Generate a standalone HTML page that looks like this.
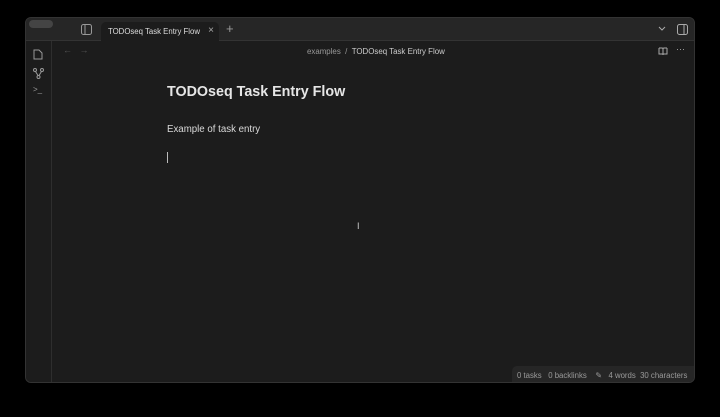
<!DOCTYPE html>
<html><head><meta charset="utf-8"><style>
*{margin:0;padding:0;box-sizing:border-box}
body{width:720px;height:417px;background:#000;font-family:"Liberation Sans",sans-serif;position:relative;overflow:hidden;color:#dadada}
.win{position:absolute;left:25px;top:17px;width:670px;height:366px;background:#1c1c1c;border-radius:6px;overflow:hidden;border:1px solid #333}
.top{position:absolute;left:0;top:0;width:100%;height:23px;background:#262626;border-bottom:1px solid #333}
.tab{position:absolute;left:75px;top:4px;width:118px;height:20px;background:#1c1c1c;border-radius:5px 5px 0 0;font-size:7.8px;color:#dcdcdc;padding:5px 0 0 7px}
.ribbon{position:absolute;left:0;top:23px;width:26px;bottom:0;border-right:1px solid #2e2e2e;background:#1c1c1c}
.t{position:absolute;white-space:nowrap}
.status{position:absolute;right:0;bottom:0;width:182px;height:16px;background:#262626;border-radius:5px 0 0 0;font-size:7.8px;color:#9a9a9a;padding:5px 0 0 5px}
</style></head><body>
<div class="win">
 <div class="top">
  <div class="t" style="left:3px;top:2px;width:24px;height:8px;border-radius:4px;background:#444"></div>
  <svg class="t" style="left:55px;top:6px" width="11" height="11"><rect x="0.5" y="0.5" width="10" height="10" rx="2" fill="none" stroke="#999"/><line x1="4" y1="1" x2="4" y2="10" stroke="#999"/></svg>
  <div class="tab">TODOseq Task Entry Flow<span style="position:absolute;right:5px;top:3px;color:#aaa;font-size:10px">×</span></div>
  <div class="t" style="left:200px;top:3px;color:#999;font-size:13px">+</div>
  <svg class="t" style="left:632px;top:8px" width="8" height="6"><path d="M1 1 L4 4 L7 1" fill="none" stroke="#aaa"/></svg>
  <svg class="t" style="left:651px;top:6px" width="11" height="11"><rect x="0.5" y="0.5" width="10" height="10" rx="2" fill="none" stroke="#aaa"/><line x1="7" y1="1" x2="7" y2="10" stroke="#aaa"/></svg>
 </div>
 <div class="ribbon">
  <svg class="t" style="left:7px;top:8px" width="10" height="11"><path d="M1 1 H6 L9 4 V10 H1 Z" fill="none" stroke="#999"/></svg>
  <svg class="t" style="left:7px;top:27px" width="11" height="11"><circle cx="2" cy="2" r="1.5" fill="none" stroke="#999"/><circle cx="9" cy="2" r="1.5" fill="none" stroke="#999"/><circle cx="5.5" cy="9" r="1.5" fill="none" stroke="#999"/><path d="M2.5 3.5 L5 7.5 M8.5 3.5 L6 7.5" stroke="#999"/></svg>
  <div class="t" style="left:7px;top:44px;font-size:8px;color:#999">&gt;_</div>
 </div>
 <div class="t" style="left:37px;top:27px;font-size:9px;color:#555">←&nbsp;&nbsp;&nbsp;→</div>
 <div class="t" style="left:281px;top:29px;font-size:7.9px;color:#999">examples&nbsp; / &nbsp;<span style="color:#ccc">TODOseq Task Entry Flow</span></div>
 <svg class="t" style="left:632px;top:29px" width="10" height="9"><path d="M1 1 H4 Q5 1 5 2 V8 M9 1 H6 Q5 1 5 2 M1 1 V7 H9 V1" fill="none" stroke="#aaa"/></svg>
 <div class="t" style="left:650px;top:26px;font-size:9px;color:#aaa">···</div>
 <div class="t" style="left:141px;top:66px;font-size:14.3px;font-weight:bold;color:#e6e6e6">TODOseq Task Entry Flow</div>
 <div class="t" style="left:141px;top:106px;font-size:9.7px;color:#dadada">Example of task entry</div>
 <div class="t" style="left:141px;top:134px;width:1px;height:11px;background:#bbb"></div>
 <div class="t" style="left:331px;top:203px;font-size:9px;color:#ccc">I</div>
 <div class="status">0 tasks &nbsp; 0 backlinks &nbsp; &nbsp;✎ &nbsp; 4 words &nbsp;30 characters</div>
</div>
</body></html>
